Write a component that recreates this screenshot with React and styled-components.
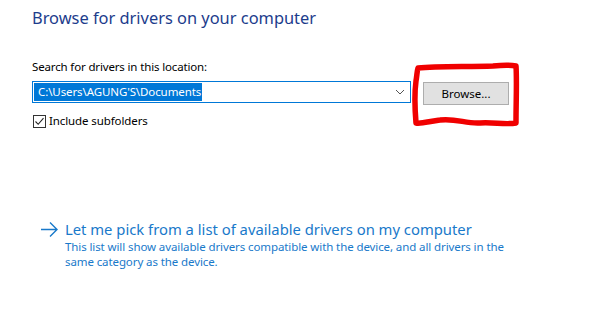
import React from 'react'
import styled, { createGlobalStyle } from 'styled-components'

const GlobalStyle = createGlobalStyle`
    html, body {
        margin: 0;
        padding: 0;
        background: #ffffff;
    }
    body {
        font-family: "Noto Sans", "Open Sans", sans-serif;
        color: #000000;
    }
`;

const Page = styled.main`
    position: relative;
    width: 600px;
    height: 313px;
    padding: 7px 0 0 32px;
    box-sizing: border-box;
    overflow: hidden;
`;

const Title = styled.h1`
    margin: 0;
    font-size: 16.4px;
    font-weight: 400;
    line-height: 22px;
    color: #1c3c8c;
`;

const Label = styled.div`
    margin-top: 30px;
    font-size: 11.5px;
    letter-spacing: -0.15px;
    line-height: 16px;
    color: #000000;
`;

const LocationRow = styled.div`
    display: flex;
    align-items: flex-start;
    margin-top: 6px;
`;

const Combo = styled.div`
    display: flex;
    align-items: center;
    justify-content: space-between;
    width: 379px;
    height: 22px;
    box-sizing: border-box;
    border: 1px solid #0078d7;
    padding: 0 5px 0 1px;
`;

const Selected = styled.span`
    background: #0078d7;
    color: #ffffff;
    font-size: 11.5px;
    letter-spacing: -0.1px;
    line-height: 18px;
    padding: 0 1px 0 4px;
`;

const Button = styled.button`
    margin-left: 12px;
    margin-top: 1px;
    width: 86px;
    height: 23px;
    box-sizing: border-box;
    background: #e1e1e1;
    border: 1px solid #adadad;
    font-family: inherit;
    font-size: 11.5px;
    color: #000000;
    padding: 0;
`;

const CheckRow = styled.label`
    display: flex;
    align-items: center;
    gap: 3px;
    margin-top: 9px;
    margin-left: 1px;
    font-size: 11.5px;
    letter-spacing: -0.1px;
    line-height: 14px;
`;

const Box = styled.span`
    display: inline-flex;
    width: 13px;
    height: 13px;
    box-sizing: border-box;
    border: 1px solid #333333;
    align-items: center;
    justify-content: center;
`;

const LinkBlock = styled.section`
    display: grid;
    grid-template-columns: 25px 1fr;
    margin-top: 91px;
    margin-left: 8px;
    color: #1979ca;
`;

const LinkTitle = styled.div`
    font-size: 14.8px;
    line-height: 20px;
`;

const LinkText = styled.p`
    margin: 0;
    grid-column: 2;
    font-size: 11.5px;
    letter-spacing: -0.1px;
    line-height: 15px;
    width: 445px;
`;

const Scribble = styled.svg`
    position: absolute;
    left: 408px;
    top: 61px;
`;

export default function App() {
    return (
        <Page>
            <GlobalStyle />
            <Title>Browse for drivers on your computer</Title>

            <Label>Search for drivers in this location:</Label>
            <LocationRow>
                <Combo>
                    <Selected>C:\Users\AGUNG'S\Documents</Selected>
                    <svg width="10" height="6" viewBox="0 0 10 6">
                        <path d="M1 1 L5 5 L9 1" fill="none" stroke="#555" strokeWidth="1" />
                    </svg>
                </Combo>
                <Button type="button">Browse...</Button>
            </LocationRow>

            <CheckRow>
                <Box>
                    <svg width="11" height="11" viewBox="0 0 11 11">
                        <path d="M1.5 5.5 L4.2 8.3 L9.5 2.2" fill="none" stroke="#222" strokeWidth="1.1" />
                    </svg>
                </Box>
                Include subfolders
            </CheckRow>

            <LinkBlock>
                <svg width="19" height="20" viewBox="0 0 19 20">
                    <path d="M1 10.5 H17 M10 3.5 L17 10.5 L10 17.5" fill="none" stroke="#1979ca" strokeWidth="1.4" />
                </svg>
                <LinkTitle>Let me pick from a list of available drivers on my computer</LinkTitle>
                <LinkText>
                    This list will show available drivers compatible with the device, and all drivers in the same category as the device.
                </LinkText>
            </LinkBlock>

            {/* hand-drawn red mark round the Browse button */}
            <Scribble width="115" height="70" viewBox="0 0 115 70">
                <path
                    d="M10 7 C30 5 60 6 85 5 C95 4 103 4 108 5 C109 20 108 40 108 62 C98 64 85 61 72 62 C58 63 48 57 32 59 C22 60 14 63 8 62 C7 50 6 35 8 20 C9 14 9 10 10 7 Z"
                    fill="none"
                    stroke="#f00000"
                    strokeWidth="5.5"
                    strokeLinejoin="round"
                    strokeLinecap="round"
                />
            </Scribble>
        </Page>
    )
}
